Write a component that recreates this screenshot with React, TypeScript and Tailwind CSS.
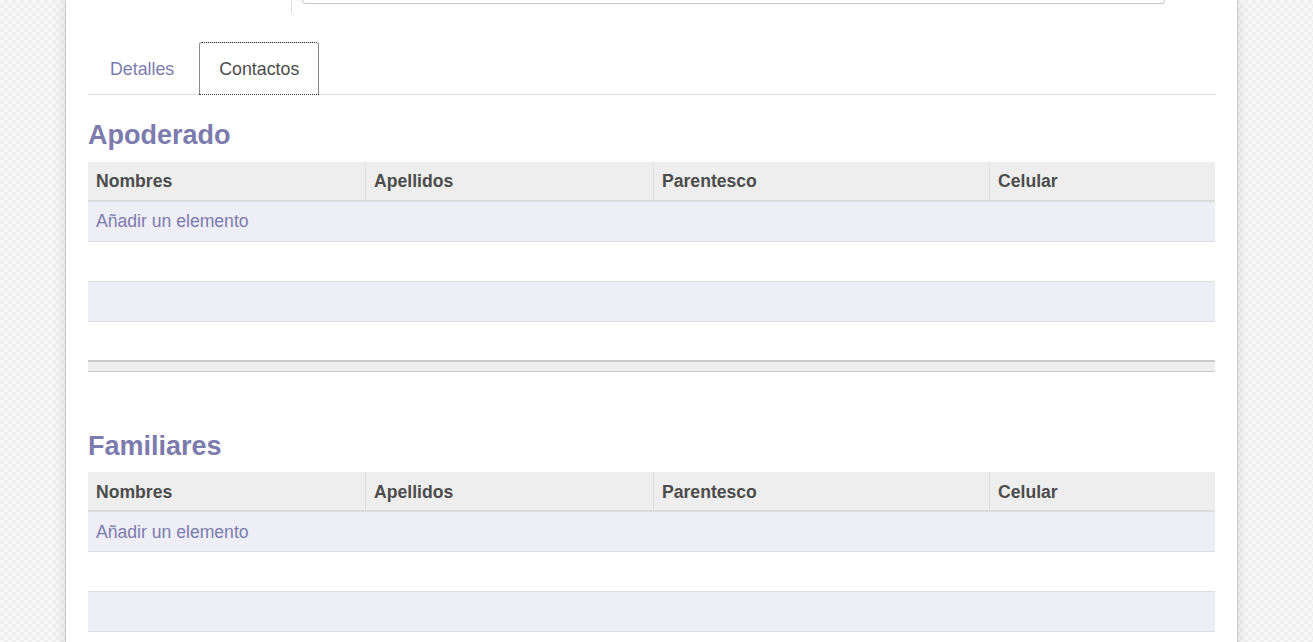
import React from "react";

const cols = [
  { name: "Nombres", w: "w-[278px]" },
  { name: "Apellidos", w: "w-[288px]" },
  { name: "Parentesco", w: "w-[336px]" },
  { name: "Celular", w: "flex-1" },
];

function Section({ title }: { title: string }) {
  return (
    <div>
      <h2 className="text-[27px] leading-[1.1] font-bold text-[#7c7bad] mb-[11px]">{title}</h2>
      <div className="flex flex-col">
        <div className="flex h-[40px] bg-[#eeeeee] border-b-2 border-[#dcdcdc]">
          {cols.map((c, i) => (
            <div
              key={c.name}
              className={`${c.w} flex items-center pl-[8px] pt-[2px] font-bold text-[17.6px] text-[#4c4c4c] ${
                i < cols.length - 1 ? "border-r border-[#dedede]" : ""
              }`}
            >
              {c.name}
            </div>
          ))}
        </div>
        <div className="h-[40px] bg-[#eeeef7] border-b border-[#dcdce2] flex items-center pl-[8px] text-[17.6px] text-[#7c7bad]">
          Añadir un elemento
        </div>
        <div className="h-[40px] bg-white border-b border-[#dcdce2]" />
        <div className="h-[40px] bg-[#eeeef7] border-b border-[#dcdce2]" />
        <div className="h-[38px] bg-white" />
        <div className="h-[12px] bg-[#eeeeee] border-t-2 border-b border-[#c8c8c8]" />
      </div>
    </div>
  );
}

export default function App() {
  return (
    <div
      className="min-h-screen w-full bg-[repeating-conic-gradient(#efefef_0_25%,#f8f8f8_0_50%)] bg-[length:8px_8px]"
      style={{ fontFamily: '"Liberation Sans", Arial, sans-serif' }}
    >
      <div className="ml-[65px] w-[1173px] min-h-[700px] bg-white border-x border-[#c9c9d2] shadow-[0_0_12px_rgba(0,0,0,0.12)] px-[22px] pb-[40px]">
        <div className="flex h-[14px]">
          <div className="w-[204px] border-r border-[#dddddd]" />
          <div className="ml-[10px] w-[863px] h-[4px] border-x border-b border-[#c8c8c8] rounded-b-[5px]" />
        </div>
        <div className="mt-[28px] flex border-b border-[#dddddd] h-[53px]">
          <div className="h-[54px] flex items-center pl-[22px] pr-[24px] mr-[1px] text-[17.8px] text-[#7c7bad]">
            Detalles
          </div>
          <div className="h-[53px] flex items-center w-[120px] justify-center text-[17.8px] text-[#4c4c4c] bg-white border border-b-0 border-[#dddddd] rounded-t-[3px] outline-1 outline-dotted outline-[#333333] -outline-offset-1">
            Contactos
          </div>
        </div>
        <div className="mt-[26px]">
          <Section title="Apoderado" />
        </div>
        <div className="mt-[60px]">
          <Section title="Familiares" />
        </div>
      </div>
    </div>
  );
}
